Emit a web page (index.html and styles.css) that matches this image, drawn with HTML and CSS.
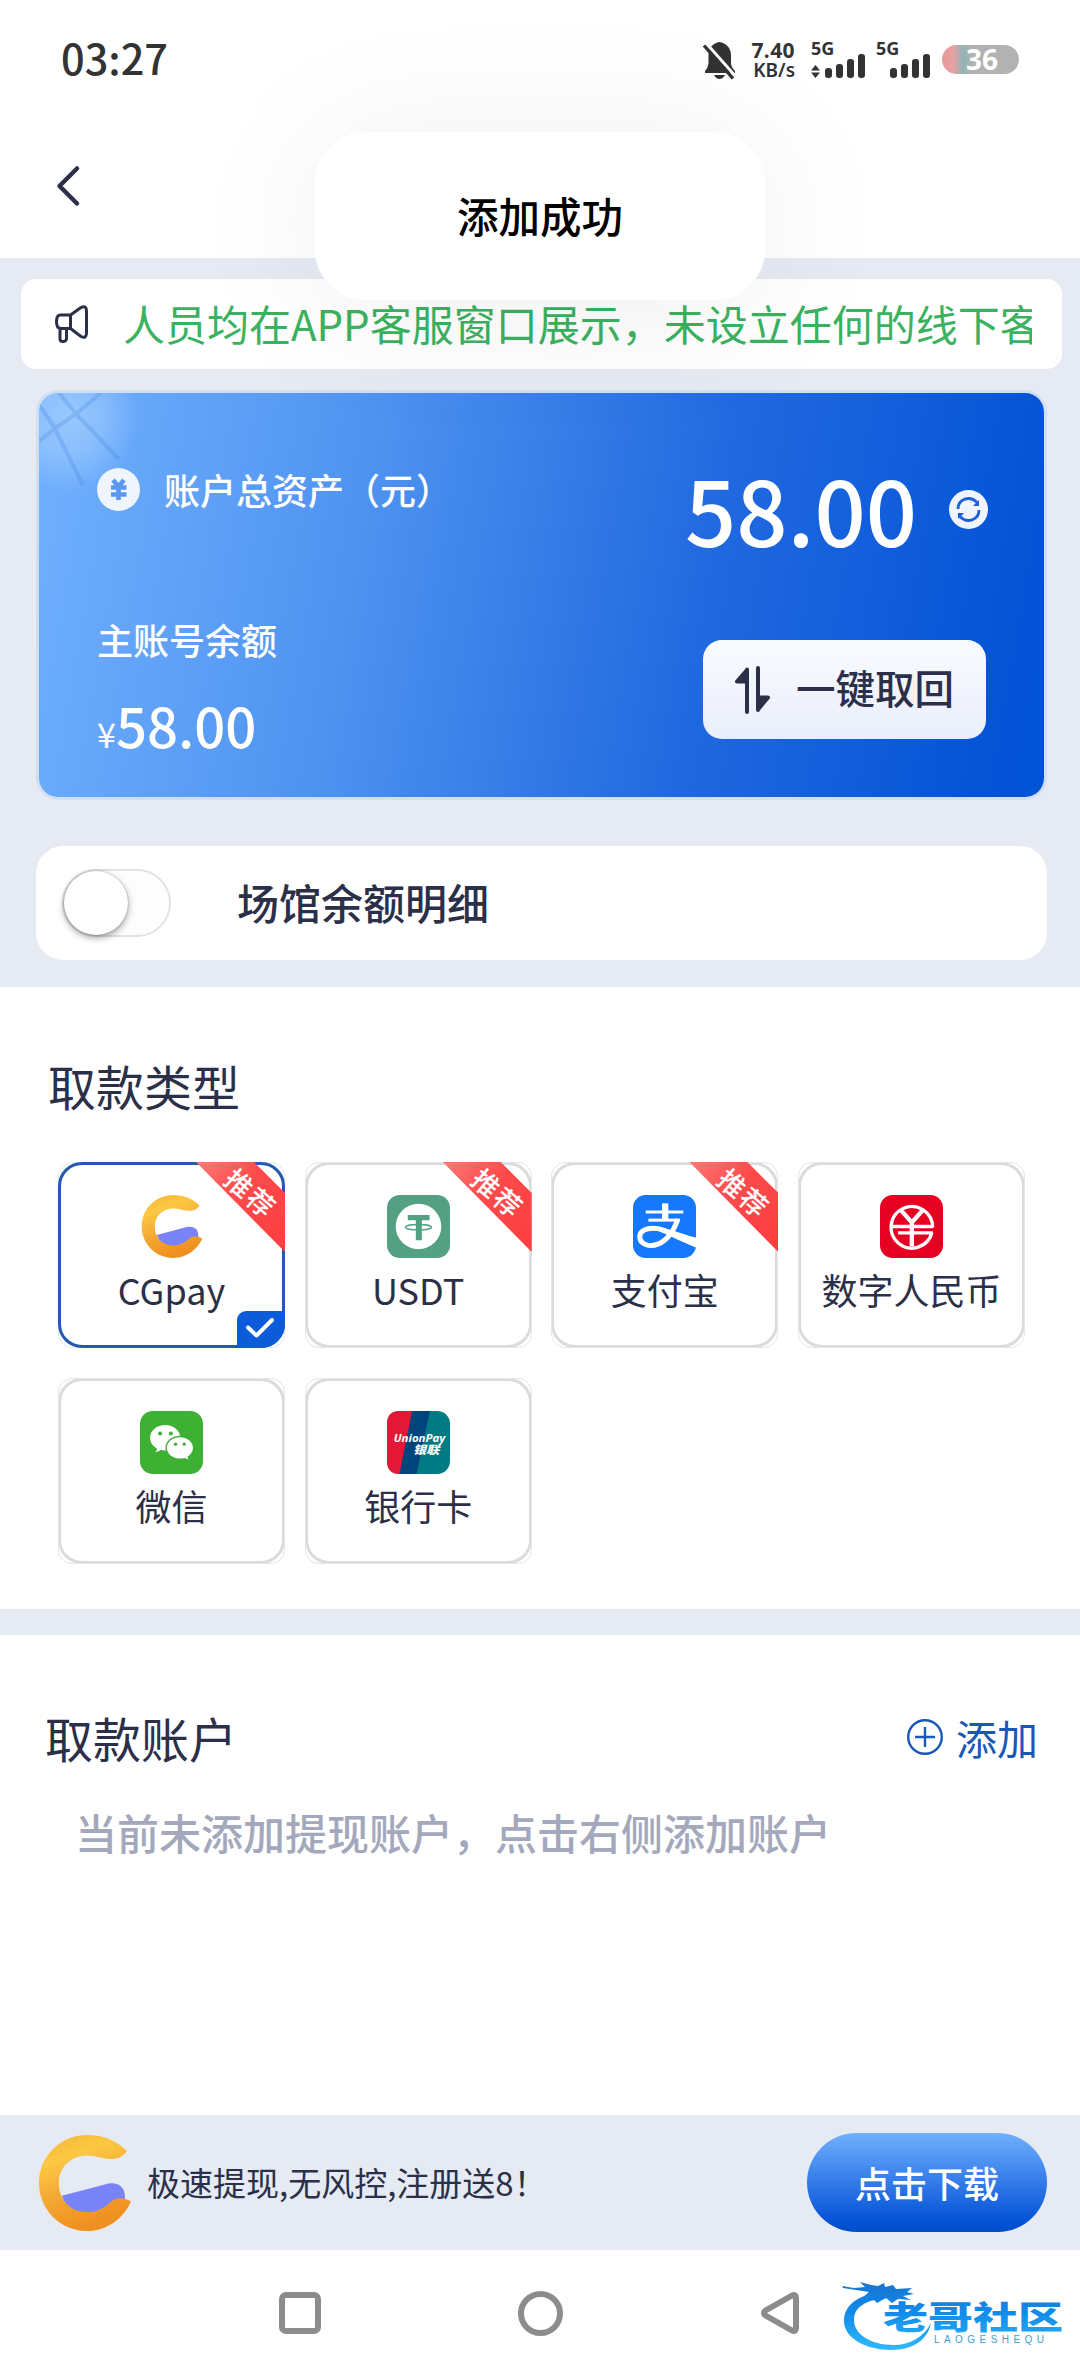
FILE: index.html
```html
<!DOCTYPE html>
<html lang="zh-CN">
<head>
<meta charset="utf-8">
<title>取款</title>
<link rel="stylesheet" href="styles.css">
</head>
<body>
<svg class="defs" aria-hidden="true">
  <defs>
    <linearGradient id="gold" x1="0" y1="0" x2="0.35" y2="1">
      <stop offset="0" stop-color="#f3b536"/><stop offset="0.3" stop-color="#fcc842"/><stop offset="0.65" stop-color="#f4a733"/><stop offset="1" stop-color="#f0901f"/>
    </linearGradient>
    <symbol id="cgpay" viewBox="0 0 188 188">
      <path fill="#7883f8" d="M50 119 142 95C158 92 174 100 174 120V132L147 136 99 158Q60 150 50 119Z"/>
      <path fill="url(#gold)" d="M178 32C160 12 133 0 99 0 47 0 5 42 5 94S47 188 99 188C140 188 172 162 186 130 176 124 160 120 147 130 135 142 120 151 99 151 65 150 44 126 44 94 44 62 68 40 100 40 118 40 135 48 152 47 164 46 172 40 178 32Z"/>
    </symbol>
  </defs>
</svg>
<div class="phone">
  <div class="statusbar">
    <div class="clock">03:27</div>
    <div class="indicators">
      <svg class="bell" viewBox="0 0 31 37"><path fill="#333" d="M15.500 0C22 1 27 6 27 13V21Q27 25 31 29V31H1V29Q4 26 4.500 21V13C4.500 6 9 1 15.500 0ZM10 33H21Q19 37 15.500 37T10 33Z"/><path stroke="#fcfcfc" stroke-width="3" d="M2 1 33 36"/><path stroke="#333" stroke-width="3.400" d="M0 3.500 29 36.500"/></svg>
      <div class="speed"><span class="speed-value">7.40</span><span class="speed-unit">KB/s</span></div>
      <div class="signal">
        <span class="net">5G</span>
        <svg width="54" height="24" viewBox="0 0 54 24" fill="#333"><path d="M0 16.500 4.500 11 9 16.500ZM0 18.500H9L4.500 24Z"/><rect x="14" y="14" width="7" height="10" rx="3"/><rect x="25" y="10" width="7" height="14" rx="3"/><rect x="36" y="5" width="7" height="19" rx="3"/><rect x="47" y="0" width="7" height="24" rx="3"/></svg>
      </div>
      <div class="signal">
        <span class="net">5G</span>
        <svg width="54" height="24" viewBox="0 0 54 24" fill="#333"><rect x="14" y="14" width="7" height="10" rx="3"/><rect x="25" y="10" width="7" height="14" rx="3"/><rect x="36" y="5" width="7" height="19" rx="3"/><rect x="47" y="0" width="7" height="24" rx="3"/></svg>
      </div>
      <div class="battery">36</div>
    </div>
  </div>

  <header class="header">
    <svg class="back" viewBox="0 0 22 40"><path d="M20 2.500 2.500 20 20 37.500"/></svg>
  </header>

  <section class="assets">
    <div class="notice">
      <svg class="horn" viewBox="0 0 33 38"><path d="M15.500 10H5.500Q1.500 10 1.500 16.500T5.500 23.500H15.500ZM15.500 10 26 2.500Q31.500 0 31.500 6V28Q31.500 34 26 31.500L15.500 23.500M5 23.500V34Q5 36.500 8 36.500T11.500 34V23.500"/></svg>
      <div class="marquee">人员均在APP客服窗口展示，未设立任何的线下客</div>
    </div>

    <div class="wallet">
      <svg class="shine" viewBox="0 0 120 110"><defs><radialGradient id="glow"><stop offset="0" stop-color="#b5d9ff" stop-opacity=".6"/><stop offset=".5" stop-color="#b5d9ff" stop-opacity=".4"/><stop offset="1" stop-color="#b5d9ff" stop-opacity="0"/></radialGradient></defs><ellipse cx="30" cy="24" rx="70" ry="76" fill="url(#glow)"/><g stroke="#3f85dc" stroke-opacity=".26" stroke-width="4" fill="none"><path d="M0 12 14 32 44 92M20 0 38 22 80 66M0 48 18 34 38 20 62 0"/></g></svg>
      <div class="wallet-left">
        <div class="wallet-title">
          <svg class="coin" viewBox="0 0 43 43"><circle cx="21.500" cy="21.500" r="21.500" fill="#f0f4fd"/><path fill="none" stroke="#5a97ef" stroke-width="4.600" d="M16 12 21.500 18.500 27 12M14 19.500H29.500M14 26.500H29.500M21.500 18V32"/></svg>
          <span>账户总资产（元）</span>
        </div>
        <div class="main-label">主账号余额</div>
        <div class="main-amount"><span class="yen">¥</span>58.00</div>
      </div>
      <div class="wallet-right">
        <div class="total"><span>58.00</span>
          <svg class="refresh" viewBox="0 0 39 39"><circle cx="19.500" cy="19.500" r="19.500" fill="#f0f4fd"/><g fill="none" stroke="#1c5fd8" stroke-width="2.800"><path d="M9 19C9 9 21 5 28 12.500M30 20C30 30 18 34 11 26.500"/></g><path fill="#1c5fd8" d="M30 10V16H24ZM9 29V23H15Z"/></svg>
        </div>
        <button class="collect">
          <svg viewBox="0 0 35 48"><path d="M12 3.500V46M12 4 2 15.500H12ZM23 2V44M23 43.500 33 31.500H23Z" fill="#2b3048" stroke="#2b3048" stroke-width="4" stroke-linejoin="round" stroke-linecap="round"/></svg>
          <span>一键取回</span>
        </button>
      </div>
    </div>

    <div class="venue">
      <div class="switch"><i class="knob"></i></div>
      <span>场馆余额明细</span>
    </div>
  </section>

  <section class="types">
    <h2 class="title">取款类型</h2>
    <div class="grid">
      <div class="type selected">
        <svg class="logo"><use href="#cgpay"/></svg>
        <span>CGpay</span>
        <div class="ribbon"><b>推荐</b></div>
        <div class="tick"><svg viewBox="0 0 28 20"><path d="M2 9.500 10.500 17.500 26 2"/></svg></div>
      </div>
      <div class="type">
        <svg class="logo" viewBox="0 0 188 188"><rect width="188" height="188" rx="38" fill="#53a083"/><circle cx="94" cy="94" r="68" fill="#fff"/><path fill="#53a083" d="M62 60H127V75H104V135H86V75H62Z"/><ellipse cx="94" cy="96" rx="39" ry="8" fill="none" stroke="#53a083" stroke-width="4"/></svg>
        <span>USDT</span>
        <div class="ribbon"><b>推荐</b></div>
      </div>
      <div class="type">
        <svg class="logo" viewBox="0 0 188 188"><rect width="188" height="188" rx="38" fill="#1677ff"/><g fill="none" stroke="#fff"><path stroke-width="19" d="M96 25V72"/><path stroke-width="9" d="M38 51H150"/><path stroke-width="9" d="M46 75H140"/><path stroke-width="15" d="M134 72C124 100 104 134 76 146 48 158 20 146 20 124 22 100 60 92 96 107"/></g><path fill="#fff" d="M64 93C100 96 145 117 188 127V157C155 144 112 123 82 110Z"/></svg>
        <span>支付宝</span>
        <div class="ribbon"><b>推荐</b></div>
      </div>
      <div class="type">
        <svg class="logo" viewBox="0 0 188 188"><rect width="188" height="188" rx="38" fill="#e60021"/><g fill="none" stroke="#fff" stroke-width="10"><path d="M157 97A62 62 0 1 0 155 112"/><path d="M34 94H158M54 113H158"/><path stroke-width="13" d="M63 46 95 82 127 46M95 80V154"/></g></svg>
        <span>数字人民币</span>
      </div>
      <div class="type">
        <svg class="logo" viewBox="0 0 188 188"><rect width="188" height="188" rx="38" fill="#3eb034"/><g fill="#fff"><ellipse cx="75" cy="80" rx="45" ry="38"/><path d="M53 108 47 124 70 113Z"/></g><ellipse cx="119" cy="110" rx="43" ry="36" fill="#3eb034"/><g fill="#fff"><ellipse cx="119" cy="110" rx="39" ry="32"/><path d="M128 138 144 145 140 130Z"/></g><g fill="#3eb034"><circle cx="60" cy="67" r="6"/><circle cx="92" cy="67" r="6"/><circle cx="106" cy="99" r="5"/><circle cx="132" cy="99" r="5"/></g></svg>
        <span>微信</span>
      </div>
      <div class="type">
        <svg class="logo" viewBox="0 0 188 188"><rect width="188" height="188" rx="38" fill="#007b83"/><path fill="#00447c" d="M72 0H128L88 188H36Z"/><path fill="#e21836" d="M75 0H38Q0 0 0 38V150Q0 188 37 188Z"/><text class="up-latin" x="20" y="93" textLength="154" lengthAdjust="spacingAndGlyphs">UnionPay</text><text class="up-cjk" x="78" y="129" textLength="78" lengthAdjust="spacingAndGlyphs">银联</text></svg>
        <span>银行卡</span>
      </div>
    </div>
  </section>

  <section class="accounts">
    <div class="accounts-head">
      <h2 class="title">取款账户</h2>
      <a class="add"><svg viewBox="0 0 36 36"><circle cx="18" cy="18" r="16.800"/><path d="M8 18H28M18 8V28"/></svg><span>添加</span></a>
    </div>
    <p class="hint">当前未添加提现账户，点击右侧添加账户</p>
  </section>

  <footer class="promo">
    <svg class="promo-logo" viewBox="5 0 181 188" preserveAspectRatio="none"><use href="#cgpay" width="188" height="188"/></svg>
    <span class="promo-text">极速提现,无风控,注册送8！</span>
    <button class="download">点击下载</button>
  </footer>

  <nav class="navbar">
    <svg width="42" height="42" viewBox="0 0 42 42"><rect x="3" y="3" width="36" height="36" rx="4"/></svg>
    <svg width="45" height="45" viewBox="0 0 45 45"><circle cx="22.500" cy="22.500" r="19.500"/></svg>
    <svg width="38" height="42" viewBox="0 0 38 42"><path d="M4.500 18.500Q1.500 21 4.500 23.500L31 38.500Q35 40 35 36V6Q35 2 31 3.500Z"/></svg>
  </nav>

  <svg class="watermark" viewBox="0 0 222 70">
    <defs><linearGradient id="sea" gradientUnits="userSpaceOnUse" x1="0" y1="4" x2="0" y2="68"><stop offset="0" stop-color="#1677d2"/><stop offset=".45" stop-color="#118ceb"/><stop offset="1" stop-color="#2fb9fa"/></linearGradient></defs>
    <g fill="url(#sea)">
      <path d="M48 11C20 11 2 22 2 40 2 57 24 69 49 69 72 69 86 58 89 42 82 56 68 64 52 64 28 64 12 53 12 39 12 26 24 19 44 17Z"/>
      <path d="M0 5 12 7 23 6 18 1 29 4 36 5 42 2 43 6 51 4 54 8 70 7 65 11 72 13 61 15 69 19 56 18 50 22 44 17 35 22 30 17 20 17 27 11 14 9 1 7Z"/>
      <text class="wm-cjk" x="41" y="48" textLength="180" lengthAdjust="spacingAndGlyphs">老哥社区</text>
    </g>
    <text class="wm-latin" x="92" y="62" textLength="110">LAOGESHEQU</text>
  </svg>

  <div class="toast">添加成功</div>
</div>
</body>
</html>
```

FILE: styles.css
```css
* { box-sizing: border-box; margin: 0; padding: 0; }

body {
  width: 1080px;
  background: #fff;
  color: #2b3048;
  font-family: "Noto Sans CJK SC", "Noto Sans", sans-serif;
}

svg { display: block; flex: none; overflow: visible; }
button { border: 0; font: inherit; color: inherit; }
.defs { position: absolute; width: 0; height: 0; }

.phone {
  position: relative;
  display: flex;
  flex-direction: column;
  width: 1080px;
  height: 2376px;
  overflow: hidden;
}

/* status bar */
.statusbar {
  display: flex;
  justify-content: space-between;
  height: 114px;
  padding: 0 61px 0 61px;
  color: #333;
}
.clock { font-size: 41.500px; font-weight: 500; line-height: 114px; }
.indicators { display: flex; padding-top: 42px; font-family: "Noto Sans", sans-serif; font-weight: 700; }
.bell { width: 31px; height: 37px; margin-right: 14px; }
.speed { display: flex; flex-direction: column; align-items: flex-end; width: 46px; margin-right: 16px; }
.speed-value { font-size: 21px; line-height: 16px; letter-spacing: .4px; }
.speed-unit { font-size: 19px; line-height: 22px; font-weight: 600; padding-top: 1px; }
.signal { width: 54px; height: 36px; margin-right: 11px; }
.net { display: block; font-size: 18px; line-height: 13px; height: 12px; }
.signal + .battery { margin-left: 1px; }
.battery {
  width: 77px;
  height: 29px;
  margin-top: 3px;
  border-radius: 15px;
  background: linear-gradient(90deg, #e99a98 0, #e2a3a1 12px, #8fb4b6 21px, #b2b2b2 30px);
  color: #fff;
  font-size: 28px;
  line-height: 29px;
  text-align: center;
  text-indent: 3px;
}

.header { display: flex; align-items: center; height: 144px; padding-left: 57px; }
.back { width: 22px; height: 40px; fill: none; stroke: #2b3048; stroke-width: 4.500; stroke-linecap: round; stroke-linejoin: round; }

/* balance area */
.assets { height: 729px; padding: 21px 17px 0 21px; background: #e5eaf3; }
.notice {
  display: flex;
  align-items: center;
  width: 1041px;
  height: 90px;
  padding: 0 30px 0 34px;
  border-radius: 15px;
  background: #fff;
}
.horn { width: 33px; height: 38px; fill: none; stroke: #2b3048; stroke-width: 3; stroke-linejoin: round; }
.marquee {
  width: 909px;
  margin-left: 35px;
  overflow: hidden;
  white-space: nowrap;
  color: #3bb25f;
  font-size: 42px;
  line-height: 88px;
  height: 90px;
}

.wallet {
  position: relative;
  display: flex;
  justify-content: space-between;
  width: 1005px;
  height: 404px;
  margin: 24px 0 0 18px;
  padding: 0 56px 0 58px;
  border-radius: 19px;
  background: linear-gradient(100deg, #71b0fe 0%, #4e93f0 32%, #2068df 66%, #0252d6 97%);
  box-shadow: 0 0 0 3px rgba(205, 220, 243, .8);
  color: #fff;
}
.shine { position: absolute; left: 0; top: 0; width: 120px; height: 110px; overflow: hidden; border-top-left-radius: 19px; }
.wallet-left { position: relative; padding-top: 66px; }
.wallet-title { display: flex; align-items: center; gap: 24px; height: 60px; font-size: 36px; font-weight: 500; }
.coin { width: 43px; height: 43px; }
.main-label { height: 50px; margin-top: 95px; font-size: 36px; font-weight: 500; line-height: 50px; }
.main-amount { height: 70px; margin-top: 26px; font-size: 54.500px; font-weight: 500; line-height: 70px; }
.yen { font-size: 34px; font-weight: 400; }
.wallet-right { display: flex; flex-direction: column; align-items: flex-end; padding-top: 65px; }
.total { display: flex; align-items: center; gap: 32px; height: 100px; font-size: 90px; font-weight: 500; line-height: 100px; }
.refresh { width: 39px; height: 39px; margin-top: 2px; }
.collect {
  display: flex;
  align-items: center;
  gap: 26px;
  width: 283px;
  height: 99px;
  margin: 82px 2px 0 0;
  padding-left: 32px;
  border-radius: 19px;
  background: linear-gradient(#fafbff, #e9eefb);
  color: #2b3048;
  font-size: 39.500px;
  font-weight: 500;
}
.collect span { position: relative; top: -3px; }
.collect svg { width: 35px; height: 48px; }

.venue {
  display: flex;
  align-items: center;
  width: 1011px;
  height: 114px;
  margin: 49px 0 0 15px;
  padding-left: 26px;
  border-radius: 27px;
  background: #fff;
  font-size: 42px;
  font-weight: 500;
}
.switch { width: 109px; height: 68px; margin-right: 66px; border: 2px solid #e2e2e2; border-radius: 34px; background: #fdfdfd; }
.knob { display: block; width: 64px; height: 64px; border-radius: 50%; background: #fff; box-shadow: 0 3px 7px rgba(0, 0, 0, .36), 0 0 2px rgba(0, 0, 0, .3); }
.venue span { line-height: 112px; height: 114px; }

/* withdrawal types */
.title { font-size: 48px; font-weight: 400; line-height: 70px; }
.types { height: 622px; padding: 63px 55px 0 58px; }
.types .title { margin-left: -10px; }
.grid { display: grid; grid-template-columns: repeat(4, 227px); grid-auto-rows: 186px; gap: 30px 19.700px; margin-top: 42px; }
.type {
  position: relative;
  display: flex;
  flex-direction: column;
  align-items: center;
  padding-top: 30px;
  border: 3px solid #d9dbdf;
  border-radius: 24px;
  font-size: 36px;
}
.type::before { content: ""; position: absolute; inset: -3px; border: 1px solid #e4e6ea; border-radius: 14px; }
.type span { line-height: 60px; padding-top: 1px; }
.logo { width: 63px; height: 63px; }
.selected { border-color: #2459ad; }
.selected::before { border-color: #dfe9f8; z-index: -1; }
.ribbon {
  position: absolute;
  top: -3px;
  right: -3px;
  width: 89px;
  height: 90px;
  background: linear-gradient(135deg, #fd7a76 0, #fc4b4b 40%, #fd3d3f 100%);
  clip-path: polygon(0 0, 58px 0, 100% 31px, 100% 100%);
}
.ribbon b {
  position: absolute;
  left: 25px;
  top: 15px;
  width: 60px;
  height: 32px;
  transform: rotate(41deg);
  color: #fff;
  font-size: 27px;
  font-weight: 500;
  line-height: 32px;
  text-align: center;
  letter-spacing: 2px;
}
.tick {
  position: absolute;
  right: -3px;
  bottom: -3px;
  display: flex;
  justify-content: center;
  width: 48px;
  height: 37px;
  padding: 7px 3px 0 0;
  border-radius: 9px 0 24px 0;
  background: #0c5bd8;
}
.tick svg { width: 28px; height: 20px; fill: none; stroke: #fff; stroke-width: 4; stroke-linecap: round; stroke-linejoin: round; }
.up-latin { font: italic 700 33px "Open Sans", sans-serif; fill: #fff; }
.up-cjk { font: italic 900 34px "Noto Sans CJK SC", sans-serif; fill: #fff; }

/* accounts */
.accounts { height: 506px; padding: 67px 42px 0 45px; border-top: 26px solid #e5eaf3; }
.accounts-head { display: flex; justify-content: space-between; }
.add { display: flex; align-items: center; gap: 13px; height: 70px; color: #1a58b8; font-size: 41px; }
.add svg { width: 36px; height: 36px; fill: none; stroke: #1a58b8; stroke-width: 2.400; }
.hint { margin: 30px 0 0 30px; color: #a4a8bc; font-size: 42px; font-weight: 500; line-height: 60px; }

/* promo strip */
.promo { display: flex; align-items: center; height: 135px; padding: 0 33px 0 39px; background: #e5eaf3; }
.promo-logo { width: 92px; height: 96px; }
.promo-text { flex: 1; margin: -2px 0 0 16px; font-size: 33px; font-weight: 400; }
.download {
  width: 240px;
  height: 99px;
  border-radius: 50px;
  background: linear-gradient(#70b0fe 0, #3f85ec 40%, #0554d8 88%, #004cc8 100%);
  color: #fff;
  font-size: 36px;
  font-weight: 500;
  line-height: 97px;
}

/* system navigation */
.navbar { display: flex; align-items: center; gap: 197px; height: 126px; padding-left: 279px; }
.navbar svg { fill: none; stroke: #8c8c8c; stroke-width: 6; stroke-linejoin: round; }
.navbar svg:last-child { margin-left: 1px; }

.watermark { position: absolute; left: 842px; top: 2281px; width: 222px; height: 70px; }
.wm-cjk { font: 900 32px "Noto Sans CJK SC", sans-serif; }
.wm-latin { font: 400 10px "Liberation Sans", sans-serif; fill: #3b9fd2; }

.toast {
  position: absolute;
  left: 315px;
  top: 132px;
  width: 450px;
  height: 168px;
  border-radius: 50px;
  background: #fff;
  box-shadow: 0 10px 150px rgba(0, 0, 0, .07);
  color: #000;
  font-size: 41.500px;
  font-weight: 500;
  line-height: 166px;
  text-align: center;
}
```
